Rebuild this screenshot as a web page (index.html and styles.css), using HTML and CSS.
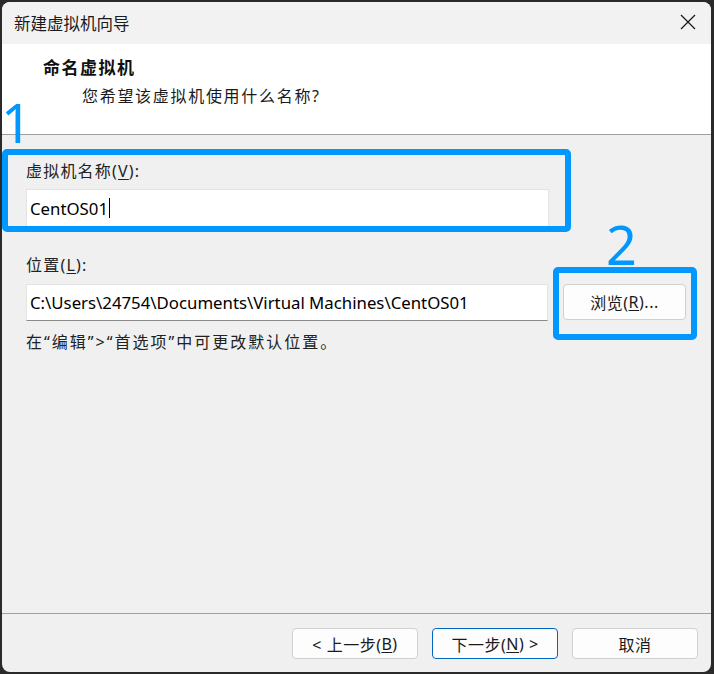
FILE: index.html
```html
<!DOCTYPE html>
<html lang="zh-CN">
<head>
<meta charset="utf-8">
<title>新建虚拟机向导</title>
<link rel="stylesheet" href="styles.css">
</head>
<body>
<div class="window">
  <div class="titlebar">
    <span class="title">新建虚拟机向导</span>
    <svg class="close" width="16" height="16" viewBox="0 0 16 16"><path d="M1 1L15 15M15 1L1 15" stroke="#1a1a1a" stroke-width="1.3" fill="none"/></svg>
  </div>
  <div class="header">
    <div class="h-title">命名虚拟机</div>
    <div class="h-sub">您希望该虚拟机使用什么名称?</div>
  </div>
  <div class="content">
    <div class="label l1">虚拟机名称(<u>V</u>):</div>
    <div class="input focused"><span class="val">CentOS01</span><span class="caret"></span></div>
    <div class="label l2">位置(<u>L</u>):</div>
    <div class="row">
      <div class="input path"><span class="val">C:\Users\24754\Documents\Virtual Machines\CentOS01</span></div>
      <div class="btn browse">浏览(<u>R</u>)...</div>
    </div>
    <div class="hint">在“编辑”&gt;“首选项”中可更改默认位置。</div>
  </div>
  <div class="footer">
    <div class="btn">&lt; 上一步(<u>B</u>)</div>
    <div class="btn primary">下一步(<u>N</u>) &gt;</div>
    <div class="btn">取消</div>
  </div>
  <div class="mark box1"></div>
  <div class="mark box2"></div>
  <div class="num n1">1</div>
  <div class="num n2">2</div>
</div>
</body>
</html>
```
FILE: styles.css
```css
html, body {
  margin: 0;
  padding: 0;
  background: #2a2a2a;
}
body {
  width: 714px;
  height: 674px;
  overflow: hidden;
}
.window {
  position: relative;
  margin: 2px 3px 2px 2px;
  width: 709px;
  height: 670px;
  border-radius: 8px;
  overflow: hidden;
  background: #f0f0f0;
  display: flex;
  flex-direction: column;
  font-family: "Noto Sans", "Noto Sans CJK SC", sans-serif;
  color: #111;
}
.titlebar {
  height: 42px;
  background: #f2f2f2;
  display: flex;
  align-items: center;
  justify-content: space-between;
  padding: 0 15px 0 12px;
}
.title {
  font-family: "Noto Sans CJK SC", sans-serif;
  font-size: 16.5px;
  color: #1a1a1a;
  line-height: 20px;
}
.close {
  display: block;
  margin-top: -2px;
}
.header {
  background: #fff;
  border-bottom: 1px solid #a0a0a0;
  box-sizing: border-box;
  height: 91px;
}
.h-title {
  font-size: 17px;
  font-weight: bold;
  line-height: 20px;
  margin: 14px 0 0 41px;
  letter-spacing: 1.5px;
}
.h-sub {
  font-size: 16px;
  line-height: 20px;
  margin: 8px 0 0 80px;
  letter-spacing: 1.7px;
  color: #1a1a1a;
}
.content {
  flex: 1;
  padding: 26px 0 0 24px;
  display: flex;
  flex-direction: column;
}
.label, .hint {
  font-size: 16px;
  line-height: 20px;
  letter-spacing: 1.2px;
  color: #222;
}
.label u, .btn u {
  text-decoration-thickness: 1px;
  text-underline-offset: 2px;
}
.input {
  background: #fff;
  border: 1px solid #e3e3e3;
  border-bottom: 1px solid #8a8a8a;
  box-sizing: border-box;
  display: flex;
  align-items: center;
  padding-left: 3px;
  font-family: "Noto Sans", "DejaVu Sans", sans-serif;
  font-size: 16.8px;
  color: #000;
}
.focused {
  margin-top: 8px;
  width: 523px;
  height: 39px;
  border-bottom: 2px solid #0067c0;
}
.caret {
  width: 1px;
  height: 20px;
  background: #000;
  margin-left: 1px;
}
.l2 {
  margin-top: 27px;
}
.row {
  margin-top: 9px;
  display: flex;
  gap: 15px;
  align-items: flex-start;
}
.path {
  width: 522px;
  height: 37px;
}
.btn {
  height: 31px;
  width: 126px;
  box-sizing: border-box;
  background: #fdfdfd;
  border: 1px solid #d0d0d0;
  border-radius: 4px;
  display: flex;
  align-items: center;
  justify-content: center;
  font-size: 16px;
  letter-spacing: 0.5px;
  color: #1a1a1a;
}
.browse {
  width: 123px;
  height: 36px;
}
.hint {
  margin-top: 11px;
  letter-spacing: 2px;
}
.footer {
  height: 59px;
  border-top: 1px solid #a0a0a0;
  box-sizing: border-box;
  display: flex;
  justify-content: flex-end;
  gap: 14px;
  padding: 14px 13px 0 0;
}
.primary {
  border-color: #0067c0;
}
.mark {
  position: absolute;
  border: 6px solid #0098ff;
  border-radius: 5px;
  box-sizing: border-box;
}
.box1 {
  left: 0;
  top: 147px;
  width: 569px;
  height: 83px;
}
.box2 {
  left: 551px;
  top: 265px;
  width: 144px;
  height: 73px;
}
.num {
  position: absolute;
  font-family: "Noto Sans", sans-serif;
  font-weight: 400;
  font-size: 54px;
  line-height: 54px;
  color: #0098ff;
}
.n1 {
  left: -1px;
  top: 93px;
}
.n2 {
  left: 604px;
  top: 215px;
}
```
